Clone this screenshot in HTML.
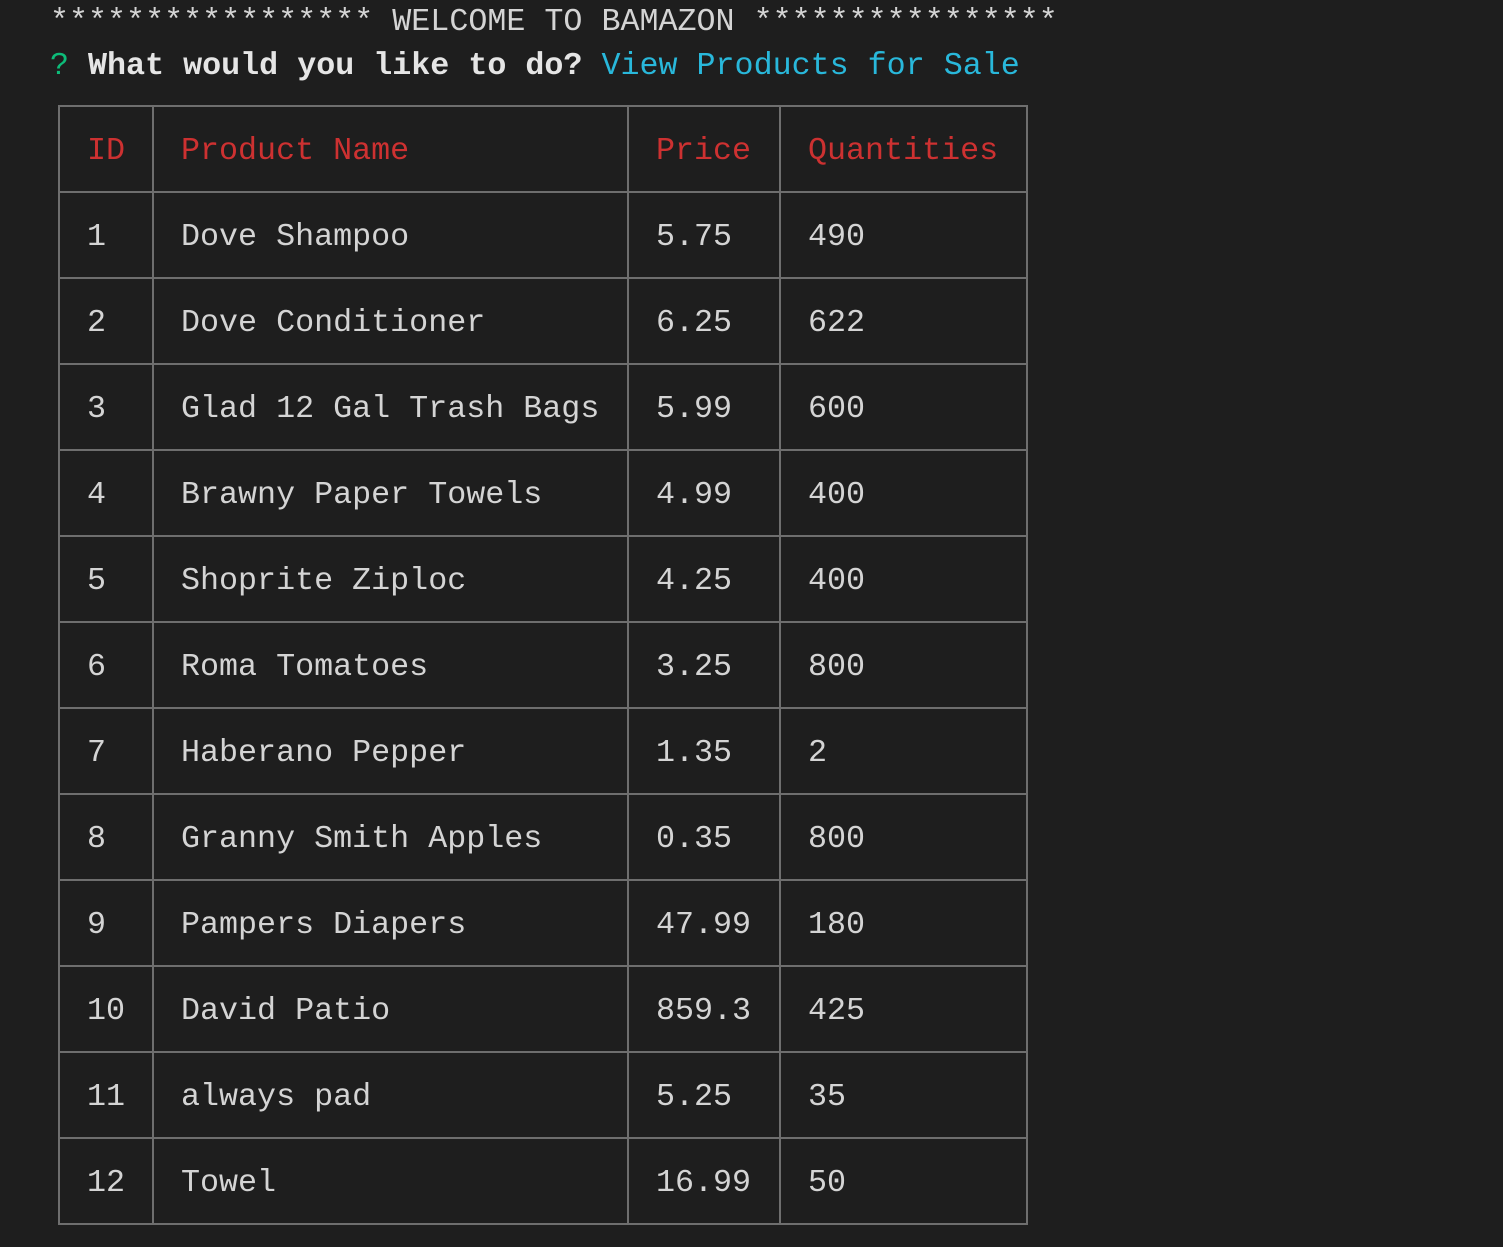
<!DOCTYPE html><html><head><meta charset="utf-8"><style>
body{margin:0;background:#1e1e1e;width:1503px;height:1247px;overflow:hidden;font-family:"Liberation Mono",monospace;font-size:31.7px;color:#d4d4d4;position:relative}
.l{position:absolute;white-space:pre;line-height:40px}
table{position:absolute;left:58px;top:105px;border-collapse:collapse;table-layout:fixed}
td{border:2px solid #6e6e6e;height:84px;padding:4px 0 0 27px;vertical-align:middle;white-space:pre;box-sizing:border-box}
tr.h td{color:#cd3131}
</style></head><body>
<div class="l" style="left:50px;top:2px">***************** WELCOME TO BAMAZON ****************</div>
<div class="l" style="left:50px;top:46px"><span style="color:#0dbc79">?</span> <b style="color:#e5e5e5">What would you like to do?</b> <span style="color:#29b8db">View Products for Sale</span></div>
<table>
<colgroup><col style="width:94px"><col style="width:475px"><col style="width:152px"><col style="width:247px"></colgroup>
<tr class="h" style="height:86px"><td>ID</td><td>Product Name</td><td>Price</td><td>Quantities</td></tr>
<tr style="height:86px"><td>1</td><td>Dove Shampoo</td><td>5.75</td><td>490</td></tr>
<tr style="height:86px"><td>2</td><td>Dove Conditioner</td><td>6.25</td><td>622</td></tr>
<tr style="height:86px"><td>3</td><td>Glad 12 Gal Trash Bags</td><td>5.99</td><td>600</td></tr>
<tr style="height:86px"><td>4</td><td>Brawny Paper Towels</td><td>4.99</td><td>400</td></tr>
<tr style="height:86px"><td>5</td><td>Shoprite Ziploc</td><td>4.25</td><td>400</td></tr>
<tr style="height:86px"><td>6</td><td>Roma Tomatoes</td><td>3.25</td><td>800</td></tr>
<tr style="height:86px"><td>7</td><td>Haberano Pepper</td><td>1.35</td><td>2</td></tr>
<tr style="height:86px"><td>8</td><td>Granny Smith Apples</td><td>0.35</td><td>800</td></tr>
<tr style="height:86px"><td>9</td><td>Pampers Diapers</td><td>47.99</td><td>180</td></tr>
<tr style="height:86px"><td>10</td><td>David Patio</td><td>859.3</td><td>425</td></tr>
<tr style="height:86px"><td>11</td><td>always pad</td><td>5.25</td><td>35</td></tr>
<tr style="height:86px"><td>12</td><td>Towel</td><td>16.99</td><td>50</td></tr>
</table>
</body></html>
